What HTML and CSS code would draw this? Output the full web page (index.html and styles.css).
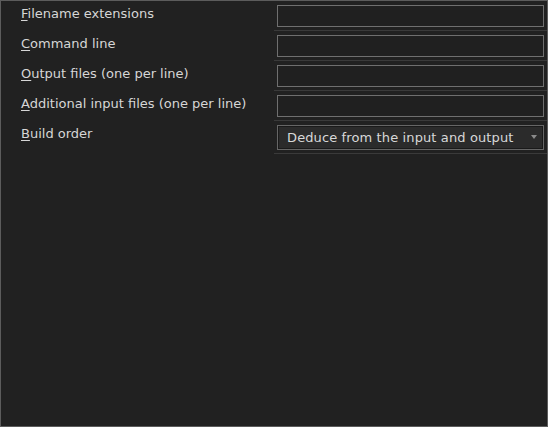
FILE: index.html
```html
<!DOCTYPE html>
<html>
<head>
<meta charset="utf-8">
<link rel="stylesheet" href="styles.css">
</head>
<body>
<div class="panel">
  <div class="grid">
    <div class="label"><u>F</u>ilename extensions</div>
    <div class="field"><div class="input"></div></div>
    <div class="label"><u>C</u>ommand line</div>
    <div class="field"><div class="input"></div></div>
    <div class="label"><u>O</u>utput files (one per line)</div>
    <div class="field"><div class="input"></div></div>
    <div class="label"><u>A</u>dditional input files (one per line)</div>
    <div class="field"><div class="input"></div></div>
    <div class="label"><u>B</u>uild order</div>
    <div class="field"><div class="select"><span class="select-text">Deduce from the input and output</span><span class="arrow"></span></div></div>
  </div>
</div>
</body>
</html>
```
FILE: styles.css
```css
html, body {
  margin: 0;
  padding: 0;
  background: #212121;
}
.panel {
  box-sizing: border-box;
  width: 548px;
  height: 427px;
  border: 1px solid #5c5c5c;
  background: #212121;
  font-family: "DejaVu Sans", sans-serif;
  color: #d6d6d6;
}
.grid {
  display: grid;
  grid-template-columns: 1fr 273px;
}
.label {
  padding: 5px 0 0 20px;
  font-size: 13px;
  line-height: 16px;
}
.label u {
  text-decoration-thickness: 1px;
  text-underline-offset: 2px;
}
.field {
  padding: 4px 3px 3px 3px;
  border-bottom: 1px solid #3a3a3a;
}
.input {
  box-sizing: border-box;
  height: 22px;
  border: 1px solid #6f6f6f;
  background: #202020;
}
.select {
  box-sizing: border-box;
  height: 25px;
  border: 1px solid #666666;
  box-shadow: inset 0 0 0 1px #1a1a1a;
  background: #2b2b2b;
  display: flex;
  align-items: center;
  padding: 0 6px 0 9px;
}
.select-text {
  flex: 1;
  font-size: 13px;
  line-height: 16px;
  letter-spacing: 0.12px;
  color: #d8d8d8;
  white-space: nowrap;
  overflow: hidden;
}
.arrow {
  width: 0;
  height: 0;
  border-left: 3.5px solid transparent;
  border-right: 3.5px solid transparent;
  border-top: 4px solid #8a8a8a;
  margin-top: -1px;
}
```
